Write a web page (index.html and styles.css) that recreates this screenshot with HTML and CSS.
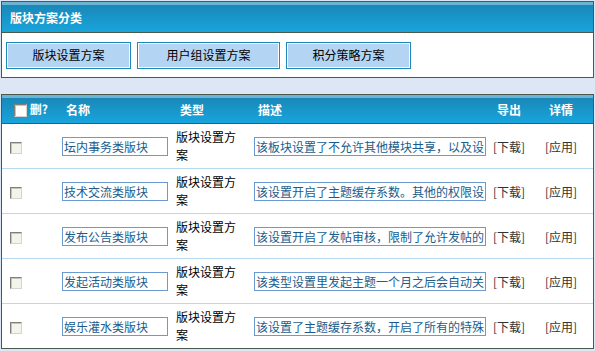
FILE: index.html
```html
<!DOCTYPE html>
<html lang="zh-CN">
<head>
    <meta charset="UTF-8">
    <meta name="viewport" content="width=device-width, initial-scale=1.0">
    <title>版块方案分类</title>
    <link rel="stylesheet" href="styles.css">
</head>
<body>
    <div class="panel">
        <div class="panel-head">版块方案分类</div>
        <div class="panel-body">
            <a href="#" class="btn">版块设置方案</a>
            <a href="#" class="btn btn-wide">用户组设置方案</a>
            <a href="#" class="btn">积分策略方案</a>
        </div>
    </div>

    <div class="panel">
        <table class="plan-table">
            <colgroup>
                <col class="col-chk">
                <col class="col-name">
                <col class="col-type">
                <col class="col-desc">
                <col class="col-exp">
                <col class="col-info">
            </colgroup>
            <thead>
                <tr>
                    <th><input type="checkbox" class="chk chk-head"> 删?</th>
                    <th>名称</th>
                    <th>类型</th>
                    <th>描述</th>
                    <th>导出</th>
                    <th>详情</th>
                </tr>
            </thead>
            <tbody>
                <tr>
                    <td><input type="checkbox" class="chk"></td>
                    <td><input type="text" class="field field-name" value="坛内事务类版块"></td>
                    <td class="type">版块设置方案</td>
                    <td><input type="text" class="field field-desc" value="该板块设置了不允许其他模块共享，以及设置了特殊的权限"></td>
                    <td><a href="#" class="link">[下载]</a></td>
                    <td><a href="#" class="link">[应用]</a></td>
                </tr>
                <tr>
                    <td><input type="checkbox" class="chk"></td>
                    <td><input type="text" class="field field-name" value="技术交流类版块"></td>
                    <td class="type">版块设置方案</td>
                    <td><input type="text" class="field field-desc" value="该设置开启了主题缓存系数。其他的权限设置保持默认"></td>
                    <td><a href="#" class="link">[下载]</a></td>
                    <td><a href="#" class="link">[应用]</a></td>
                </tr>
                <tr>
                    <td><input type="checkbox" class="chk"></td>
                    <td><input type="text" class="field field-name" value="发布公告类版块"></td>
                    <td class="type">版块设置方案</td>
                    <td><input type="text" class="field field-desc" value="该设置开启了发帖审核，限制了允许发帖的用户组"></td>
                    <td><a href="#" class="link">[下载]</a></td>
                    <td><a href="#" class="link">[应用]</a></td>
                </tr>
                <tr>
                    <td><input type="checkbox" class="chk"></td>
                    <td><input type="text" class="field field-name" value="发起活动类版块"></td>
                    <td class="type">版块设置方案</td>
                    <td><input type="text" class="field field-desc" value="该类型设置里发起主题一个月之后会自动关闭主题"></td>
                    <td><a href="#" class="link">[下载]</a></td>
                    <td><a href="#" class="link">[应用]</a></td>
                </tr>
                <tr>
                    <td><input type="checkbox" class="chk"></td>
                    <td><input type="text" class="field field-name" value="娱乐灌水类版块"></td>
                    <td class="type">版块设置方案</td>
                    <td><input type="text" class="field field-desc" value="该设置了主题缓存系数，开启了所有的特殊主题"></td>
                    <td><a href="#" class="link">[下载]</a></td>
                    <td><a href="#" class="link">[应用]</a></td>
                </tr>
            </tbody>
        </table>
    </div>
</body>
</html>
```

FILE: styles.css
```css
body {
    margin: 0;
    padding: 1px;
    background-color: #dce6f4;
    font-family: "Noto Sans CJK SC", "Liberation Sans", sans-serif;
    font-size: 12px;
    color: #000;
}
.panel {
    border: 1px solid #4a5a48;
    background-color: #fff;
    margin-bottom: 16px;
}
.panel-head {
    height: 30px;
    line-height: 31px;
    padding-left: 8px;
    border-bottom: 1px solid #4a5a48;
    color: #fff;
    font-weight: bold;
    background: linear-gradient(#6cb4d4 0, #6cb4d4 3px, #1a88b8 3px, #18a4dc 100%);
}
.panel-body {
    height: 27px;
    padding: 9px 4px 8px;
    display: flex;
    gap: 6px;
}
.btn {
    box-sizing: border-box;
    width: 125px;
    height: 27px;
    line-height: 23px;
    border: 1px solid #1e88b8;
    box-shadow: inset 0 0 0 1px #fff;
    background-color: #b4d4f4;
    color: #000;
    text-align: center;
    text-decoration: none;
}
.btn-wide {
    width: 143px;
}
.plan-table {
    width: 100%;
    border-collapse: collapse;
    table-layout: fixed;
}
.col-chk { width: 56px; }
.col-name { width: 114px; }
.col-type { width: 78px; }
.col-desc { width: 239px; }
.col-exp { width: 52px; }
.plan-table th {
    height: 28px;
    padding: 0 0 0 8px;
    text-align: left;
    color: #fff;
    font-weight: bold;
    white-space: nowrap;
    border-bottom: 1px solid #4a5a48;
    background: linear-gradient(#6cb4d4 0, #6cb4d4 3px, #1a88b8 3px, #18a4dc 100%);
}
.plan-table th:first-child {
    padding-left: 12px;
}
.plan-table td {
    height: 44px;
    padding: 0 0 0 4px;
    vertical-align: middle;
    border-bottom: 1px solid #b8daf0;
}
.plan-table td:first-child {
    padding-left: 8px;
}
.plan-table tbody tr:last-child td {
    border-bottom: none;
}
.plan-table td.type {
    padding-right: 6px;
    line-height: 18px;
}
.chk {
    appearance: none;
    -webkit-appearance: none;
    width: 12px;
    height: 12px;
    margin: 0;
    vertical-align: middle;
    border: 1px solid;
    border-color: #808078 #d8d4cc #d8d4cc #808078;
    background-color: #f4f4ec;
    box-shadow: inset 1px 1px 0 #c8c4bc;
}
.chk-head {
    width: 13px;
    height: 13px;
    background-color: #fff;
    position: relative;
    top: -1px;
}
.field {
    box-sizing: border-box;
    height: 19px;
    margin: 0;
    padding: 0 1px;
    border: 1px solid #6a9ad0;
    color: #1a5c8c;
    font-family: inherit;
    font-size: 12px;
    background-color: #fff;
}
.field-name { width: 106px; }
.field-desc { width: 232px; }
.link {
    color: #333;
    text-decoration: none;
}
```
